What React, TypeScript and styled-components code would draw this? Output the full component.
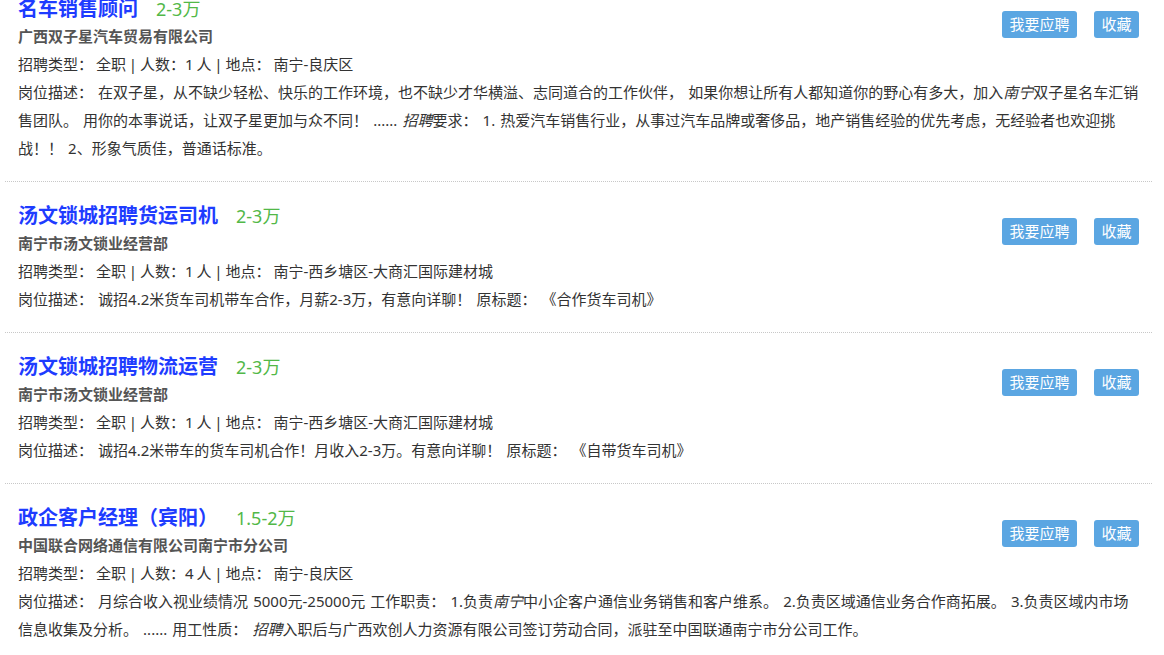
import React from "react";
import styled, { createGlobalStyle } from "styled-components";

const GlobalStyle = createGlobalStyle`
  body {
    margin: 0;
    background: #fff;
    font-family: "Noto Sans", "Noto Sans CJK SC", sans-serif;
    color: #333;
  }
`;

const List = styled.ul`
  list-style: none;
  margin: -25px 12px 0 5px;
  padding: 0;
`;

const Item = styled.li`
  padding: 19px 13px;
  border-bottom: 1px dotted #c8c8c8;
  font-size: 15px;
  line-height: 28px;
`;

const Actions = styled.div`
  float: right;
  display: flex;
  gap: 17px;
  margin-top: 17px;
`;

const Button = styled.button`
  height: 27px;
  padding: 0 7.5px;
  border: none;
  border-radius: 3px;
  background: #5ba6e2;
  color: #fff;
  font-family: inherit;
  font-size: 15px;
  line-height: 27px;
  cursor: pointer;
`;

const TitleRow = styled.div`
  display: flex;
  align-items: baseline;
  height: 28px;
  padding-top: 1px;
  box-sizing: border-box;
`;

const Title = styled.a`
  font-size: 20px;
  font-weight: bold;
  color: #1e3cff;
  text-decoration: none;
`;

const Salary = styled.span`
  margin-left: 18px;
  font-size: 18px;
  color: #52b848;
`;

const Company = styled.div`
  font-weight: bold;
  color: #555;
`;

const Line = styled.div<{ $spacing?: number }>`
  color: #333;
  word-spacing: ${(p) => p.$spacing ?? 0}px;
`;

const Mark = styled.em`
  font-style: italic;
`;

interface Job {
  title: string;
  salary: string;
  company: string;
  count: number;
  place: string;
  desc: React.ReactNode;
}

const jobs: Job[] = [
  {
    title: "名车销售顾问",
    salary: "2-3万",
    company: "广西双子星汽车贸易有限公司",
    count: 1,
    place: "南宁-良庆区",
    desc: (
      <>
        在双子星，从不缺少轻松、快乐的工作环境，也不缺少才华横溢、志同道合的工作伙伴，
        如果你想让所有人都知道你的野心有多大，加入<Mark>南宁</Mark>双子星名车汇销售团队。
        用你的本事说话，让双子星更加与众不同！ ...... <Mark>招聘</Mark>要求： 1.
        热爱汽车销售行业，从事过汽车品牌或奢侈品，地产销售经验的优先考虑，无经验者也欢迎挑战！！
        2、形象气质佳，普通话标准。
      </>
    ),
  },
  {
    title: "汤文锁城招聘货运司机",
    salary: "2-3万",
    company: "南宁市汤文锁业经营部",
    count: 1,
    place: "南宁-西乡塘区-大商汇国际建材城",
    desc: <>诚招4.2米货车司机带车合作，月薪2-3万，有意向详聊！ 原标题： 《合作货车司机》</>,
  },
  {
    title: "汤文锁城招聘物流运营",
    salary: "2-3万",
    company: "南宁市汤文锁业经营部",
    count: 1,
    place: "南宁-西乡塘区-大商汇国际建材城",
    desc: <>诚招4.2米带车的货车司机合作！月收入2-3万。有意向详聊！ 原标题： 《自带货车司机》</>,
  },
  {
    title: "政企客户经理（宾阳）",
    salary: "1.5-2万",
    company: "中国联合网络通信有限公司南宁市分公司",
    count: 4,
    place: "南宁-良庆区",
    desc: (
      <>
        月综合收入视业绩情况 5000元-25000元 工作职责： 1.负责<Mark>南宁</Mark>中小企客户通信业务销售和客户维系。
        2.负责区域通信业务合作商拓展。 3.负责区域内市场信息收集及分析。 ...... 用工性质：{" "}
        <Mark>招聘</Mark>入职后与广西欢创人力资源有限公司签订劳动合同，派驻至中国联通南宁市分公司工作。
      </>
    ),
  },
];

export default function App() {
  return (
    <>
      <GlobalStyle />
      <List>
        {jobs.map((job, index) => (
          <Item key={index}>
            <Actions>
              <Button>我要应聘</Button>
              <Button>收藏</Button>
            </Actions>
            <TitleRow>
              <Title href="#">{job.title}</Title>
              <Salary>{job.salary}</Salary>
            </TitleRow>
            <Company>{job.company}</Company>
            <Line $spacing={-1}>
              招聘类型： 全职 | 人数：{job.count} 人 | 地点： {job.place}
            </Line>
            <Line $spacing={1.2}>岗位描述： {job.desc}</Line>
          </Item>
        ))}
      </List>
    </>
  );
}
